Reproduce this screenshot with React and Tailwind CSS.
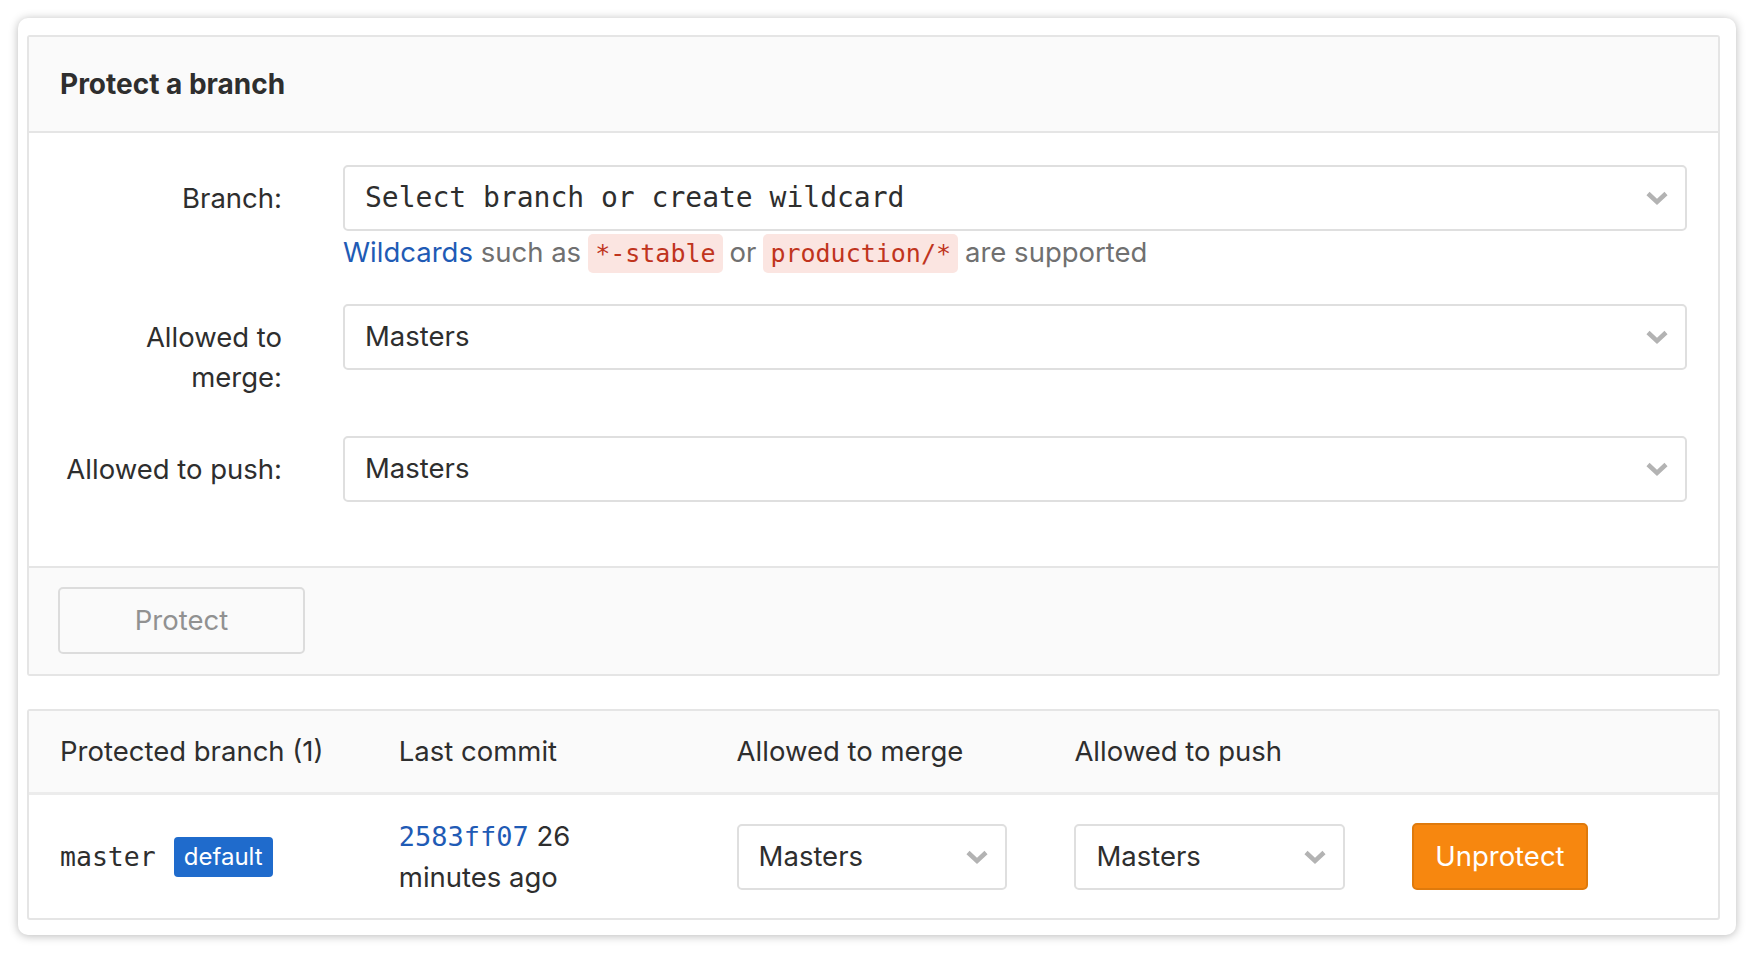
import React from "react";

const sans = { fontFamily: "Inter, 'Liberation Sans', sans-serif" };
const mono = { fontFamily: "'DejaVu Sans Mono', monospace" };

function Chevron() {
  return (
    <svg width="24" height="16" viewBox="0 0 24 16">
      <polyline points="3,3.5 12,12 21,3.5" fill="none" stroke="#b3b3b3" strokeWidth="4.5" />
    </svg>
  );
}

function Select({ children, isMono = false }) {
  return (
    <div className="flex h-[66px] w-full items-center justify-between rounded-[5px] border-2 border-[#dfdfdf] bg-white pl-[20px] pr-[16px]">
      <span
        className={isMono ? "text-[28px] text-[#2e2e2e]" : "text-[27.5px] text-[#2e2e2e]"}
        style={isMono ? mono : sans}
      >
        {children}
      </span>
      <Chevron />
    </div>
  );
}

function Code({ children }) {
  return (
    <code
      className="mx-[7px] rounded-[5px] bg-[#fbe5e1] px-[7px] py-[5px] text-[25px] text-[#c0341d]"
      style={mono}
    >
      {children}
    </code>
  );
}

export default function App() {
  return (
    <div className="min-h-[954px] w-full bg-white p-[18px]" style={sans}>
      <div className="h-[917px] rounded-[10px] bg-white pl-[9px] pr-[16px] pt-[17px] shadow-[0_1px_10px_rgba(0,0,0,0.28)]">
        {/* Protect a branch panel */}
        <div className="rounded-[3px] border-2 border-[#e5e5e5]">
          <div className="flex h-[96px] items-center border-b-2 border-[#e5e5e5] bg-[#fafafa] pl-[31px]">
            <h3 className="text-[28px] font-bold text-[#2e2e2e]">Protect a branch</h3>
          </div>
          <div className="pb-[64px] pr-[31px] pt-[32px]">
            {/* Branch row */}
            <div className="flex">
              <div className="w-[253px] shrink-0 pt-[13px] text-right text-[27.5px] leading-[40px] text-[#2e2e2e]">Branch:</div>
              <div className="ml-[61px] flex flex-1 flex-col">
                <Select isMono>Select branch or create wildcard</Select>
                <p className="mt-[3px] text-[27.5px] leading-[36px] text-[#707070]">
                  <span className="text-[#1f5bb5]">Wildcards</span> such as
                  <Code>*-stable</Code>or<Code>production/*</Code>are supported
                </p>
              </div>
            </div>
            {/* Merge row */}
            <div className="mt-[32px] flex">
              <div className="w-[253px] shrink-0 pt-[13px] text-right text-[27.5px] leading-[40px] text-[#2e2e2e]">
                Allowed to
                <br />
                merge:
              </div>
              <div className="ml-[61px] flex flex-1 items-start">
                <Select>Masters</Select>
              </div>
            </div>
            {/* Push row */}
            <div className="mt-[39px] flex">
              <div className="w-[253px] shrink-0 pt-[13px] text-right text-[27.5px] leading-[40px] text-[#2e2e2e]">Allowed to push:</div>
              <div className="ml-[61px] flex flex-1 items-start">
                <Select>Masters</Select>
              </div>
            </div>
          </div>
          <div className="border-t-2 border-[#e5e5e5] bg-[#fafafa] pb-[20px] pl-[29px] pt-[19px]">
            <button className="h-[67px] w-[247px] rounded-[5px] border-2 border-[#dcdcdc] bg-[#fafafa] text-[27.5px] text-[#919191]">
              Protect
            </button>
          </div>
        </div>

        {/* Protected branches table */}
        <div className="mt-[33px] rounded-[3px] border-2 border-[#e5e5e5]">
          <div className="grid h-[84px] grid-cols-5 items-center border-b-[3px] border-[#ececec] bg-[#fafafa] text-[27.5px] text-[#2e2e2e]">
            <div className="pl-[31px]">Protected branch (1)</div>
            <div className="pl-[32px]">Last commit</div>
            <div className="pl-[32px]">Allowed to merge</div>
            <div className="pl-[32px]">Allowed to push</div>
            <div />
          </div>
          <div className="grid h-[123px] grid-cols-5 items-center text-[27.5px] text-[#2e2e2e]">
            <div className="flex items-center pl-[31px]">
              <span className="text-[26.5px]" style={mono}>
                master
              </span>
              <span className="ml-[18px] rounded-[4px] bg-[#1f6bcc] px-[10px] py-[4px] text-[24px] leading-[32px] text-white">
                default
              </span>
            </div>
            <div className="pl-[32px]">
              <div className="w-[240px] leading-[41px]">
                <span className="text-[27px] text-[#1f5bb5]" style={mono}>
                  2583ff07
                </span>{" "}
                26 minutes ago
              </div>
            </div>
            <div className="pl-[32px] pr-[35px]">
              <Select>Masters</Select>
            </div>
            <div className="pl-[32px] pr-[35px]">
              <Select>Masters</Select>
            </div>
            <div className="pl-[32px]">
              <button className="h-[67px] rounded-[5px] border-2 border-[#df7a0c] bg-[#f7870f] px-[21px] text-[27.5px] text-white">
                Unprotect
              </button>
            </div>
          </div>
        </div>
      </div>
    </div>
  );
}
